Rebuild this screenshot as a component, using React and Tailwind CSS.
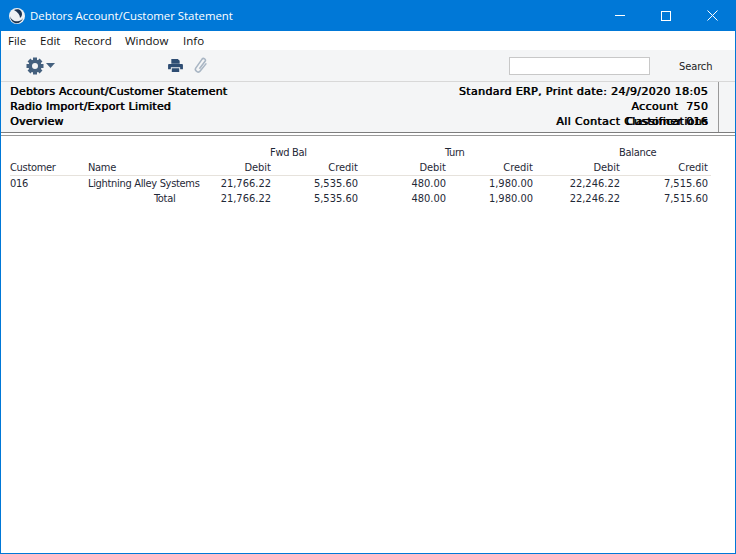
import React from "react";

const gearTeeth = [0, 45, 90, 135, 180, 225, 270, 315];

const Row = ({ cols, className = "" }) => (
  <div className={`grid grid-cols-[78px_96px_87px_87px_88px_87px_87px_88px] h-[15px] leading-[15px] ${className}`}>
    {cols.map((c, i) => (
      <div key={i} className={i < 2 ? "whitespace-nowrap tracking-[-0.32px]" : "text-right"}>
        {c}
      </div>
    ))}
  </div>
);

const App = () => {
  return (
    <div className="w-[736px] h-[554px] flex flex-col bg-white border-x border-b border-[#0078d7] font-['DejaVu_Sans_Condensed','DejaVu_Sans',sans-serif] text-[11px] text-[#1a1a1a] overflow-hidden">
      {/* Title bar */}
      <div className="h-[31px] shrink-0 bg-[#0078d7] -mx-px flex items-center text-white">
        <svg width="18" height="18" viewBox="0 0 18 18" className="ml-[8px]">
          <circle cx="9" cy="9" r="8" fill="#eef1f4" />
          <path d="M6 3c4-2 8 0 8 4 0 2-1 3-2 4 0-3-2-6-6-8z" fill="#1c3350" />
          <path d="M2 9c1 4 5 6 9 5 2-.5 3-1.500 4-3-1 4-5 6-8 5-3-1-5-4-5-7z" fill="#1c3350" />
        </svg>
        <span className="ml-[4px] text-[11.4px] font-['Open_Sans',sans-serif]">Debtors Account/Customer Statement</span>
        <div className="ml-auto mr-px flex items-center">
          <div className="w-[46px] h-[31px] flex items-center justify-center">
            <div className="w-[10px] h-px bg-white" />
          </div>
          <div className="w-[46px] h-[31px] flex items-center justify-center">
            <div className="w-[10px] h-[10px] border border-white" />
          </div>
          <div className="w-[46px] h-[31px] flex items-center justify-center">
            <svg width="11" height="11" viewBox="0 0 11 11" stroke="white" strokeWidth="1">
              <path d="M0.5 0.5l10 10M10.5 0.5l-10 10" />
            </svg>
          </div>
        </div>
      </div>

      {/* Menu */}
      <div className="h-[19px] shrink-0 flex items-center text-[11.5px] font-['Open_Sans',sans-serif] text-[#111]">
        <span className="ml-[7px] w-[32px]">File</span>
        <span className="w-[34px]">Edit</span>
        <span className="w-[51px]">Record</span>
        <span className="w-[58px]">Window</span>
        <span>Info</span>
      </div>

      {/* Toolbar */}
      <div className="h-[32px] shrink-0 bg-[#f4f5f6] border-b border-[#d8d8d8] flex items-center">
        <svg width="18" height="18" viewBox="0 0 18 18" className="ml-[25px]">
          {gearTeeth.map((a) => (
            <rect key={a} x="7" y="0.5" width="4" height="4" fill="#44607e" transform={`rotate(${a} 9 9)`} />
          ))}
          <circle cx="9" cy="9" r="4.8" fill="none" stroke="#44607e" strokeWidth="3.6" />
        </svg>
        <svg width="9" height="5" viewBox="0 0 9 5" className="ml-[2px]">
          <path d="M0 0h9L4.500 5z" fill="#44607e" />
        </svg>
        <svg width="15" height="13" viewBox="0 0 16 14" className="ml-[113px]">
          <path d="M3.500 0h7l2 2v3h-9z M0 6.500a1 1 0 0 1 1-1h14a1 1 0 0 1 1 1V11h-3V9H3v2H0z M4 10h8v4H4z" fill="#2e4d73" />
        </svg>
        <svg width="15" height="17" viewBox="0 0 14 16" fill="none" stroke="#a9b6c4" strokeWidth="1.500" className="ml-[10px]">
          <path d="M12.500 6l-6 7.500c-1.500 1.800-5.500-.6-4-3L8.500 2c1.300-1.600 4 .2 2.800 2L6 11" />
        </svg>
        <div className="ml-[301px] w-[141px] h-[18px] bg-white border border-[#c8c8c8]" />
        <span className="ml-[29px] mt-[3px] text-[#222] tracking-[-0.1px]">Search</span>
      </div>

      {/* Report header */}
      <div className="h-[50px] shrink-0 bg-[#f4f5f6] flex font-['DejaVu_Sans',sans-serif] text-[11px] leading-[15px] text-black [text-shadow:0.6px_0_0_#000]">
        <div className="pl-[9px] pt-[2px] flex-1 whitespace-nowrap tracking-[0.21px]">
          <div>Debtors Account/Customer Statement</div>
          <div>Radio Import/Export Limited</div>
          <div>Overview</div>
        </div>
        <div className="w-[280px] pt-[2px] pr-[10px] border-r border-[#999] text-right mr-[16px] whitespace-nowrap tracking-[0.37px]">
          <div>Standard ERP, Print date: 24/9/2020 18:05</div>
          <div>Account&nbsp; 750</div>
          <div className="relative">
            All Contact Classifications
            <span className="absolute right-0 top-0">Customer 016</span>
          </div>
        </div>
      </div>

      {/* Double rule */}
      <div className="h-[4px] shrink-0 border-t border-b border-t-[#7d7d7d] border-b-[#9a9a9a]" />

      {/* Table */}
      <div className="pl-[9px] pt-[9px] text-[#1f2937]">
        <div className="flex h-[15px] leading-[15px] tracking-[-0.3px]">
          <span className="ml-[260px] w-[175px]">Fwd Bal</span>
          <span className="w-[174px]">Turn</span>
          <span>Balance</span>
        </div>
        <Row cols={["Customer", "Name", "Debit", "Credit", "Debit", "Credit", "Debit", "Credit"]} className="border-b border-[#e6e2dc] h-[16px] w-[701px]" />
        <Row cols={["016", "Lightning Alley Systems", "21,766.22", "5,535.60", "480.00", "1,980.00", "22,246.22", "7,515.60"]} />
        <Row cols={["", <span className="pl-[66px]">Total</span>, "21,766.22", "5,535.60", "480.00", "1,980.00", "22,246.22", "7,515.60"]} />
      </div>
    </div>
  );
};

export default App;
